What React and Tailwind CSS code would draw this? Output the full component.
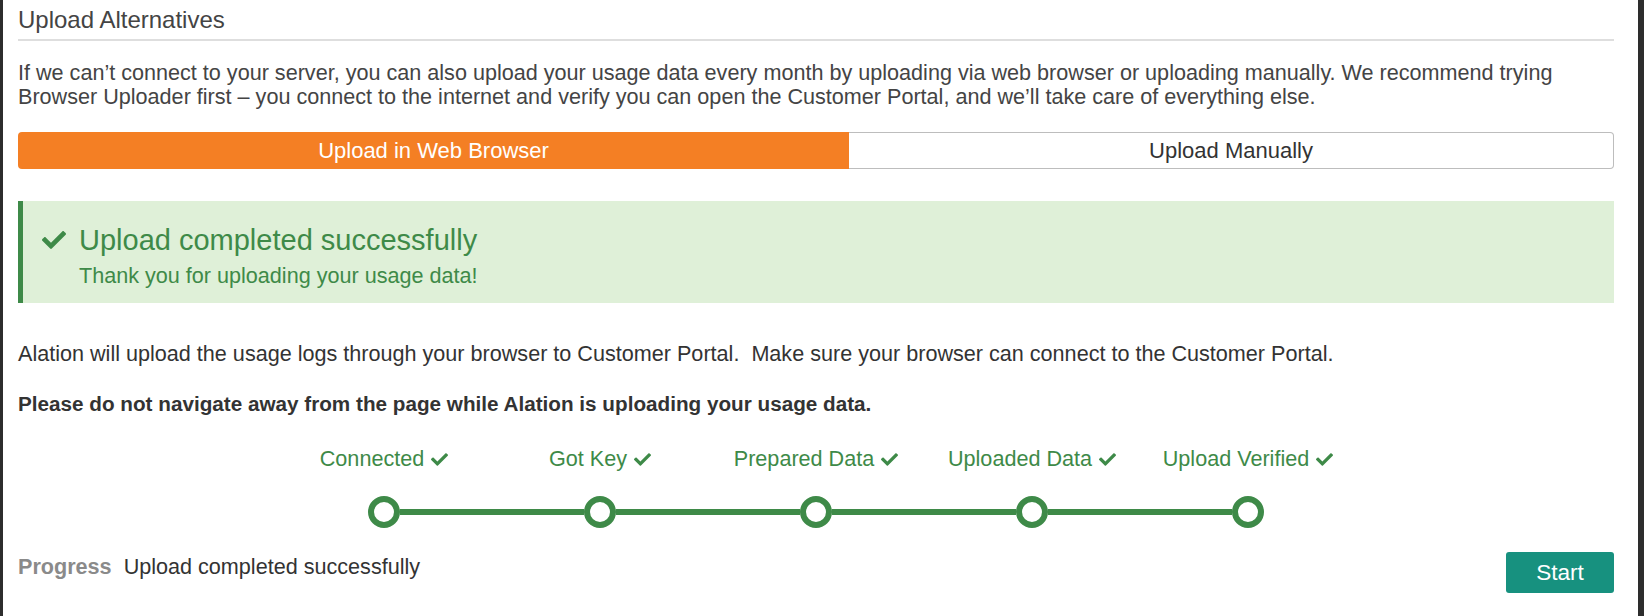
import { FaCheck } from 'react-icons/fa'

const steps = ['Connected', 'Got Key', 'Prepared Data', 'Uploaded Data', 'Upload Verified']

function Step({ label }) {
  return (
    <div className="w-[216px] flex items-center justify-center gap-[7px] text-[#3e8a48]">
      <span>{label}</span>
      <FaCheck className="w-[17px] h-[17px]" />
    </div>
  )
}

export default function App() {
  return (
    <div className="w-[1644px] h-[616px] bg-[#2d2d2d] pl-[3px] pr-[6px] font-['Liberation_Sans',Arial,sans-serif]">
      <div className="h-full bg-white pl-[15px] pr-[24px] pt-[6px] text-[21.6px] text-[#444]">
        <h1 className="text-[24px] leading-[28px] text-[#444] pb-[5px] border-b-2 border-[#dedede]">
          Upload Alternatives
        </h1>

        <p className="mt-[20px] leading-[24px]">
          If we can’t connect to your server, you can also upload your usage data every month by uploading via web browser or uploading manually. We recommend trying Browser Uploader first – you connect to the internet and verify you can open the Customer Portal, and we’ll take care of everything else.
        </p>

        <div className="mt-[23px] flex h-[37px] text-[22px]">
          <button className="w-[831px] rounded-l-[4px] bg-[#f47f24] text-white">Upload in Web Browser</button>
          <button className="flex-1 rounded-r-[4px] border border-[#bdbdbd] border-l-0 bg-white text-[#333]">Upload Manually</button>
        </div>

        <div className="mt-[32px] h-[102px] bg-[#dff0d8] border-l-[5px] border-[#3e8a48] pl-[19px] pt-[22px] text-[#3e8a48]">
          <div className="flex items-center gap-[13px]">
            <FaCheck className="w-[24px] h-[24px]" />
            <span className="text-[29px] leading-[34px]">Upload completed successfully</span>
          </div>
          <div className="pl-[37px] mt-[6px] text-[21.6px] leading-[26px]">Thank you for uploading your usage data!</div>
        </div>

        <p className="mt-[39px] leading-[24px] text-[#333]">
          Alation will upload the usage logs through your browser to Customer Portal.&nbsp; Make sure your browser can connect to the Customer Portal.
        </p>
        <p className="mt-[26px] leading-[24px] font-bold text-[20.7px] text-[#333]">
          Please do not navigate away from the page while Alation is uploading your usage data.
        </p>

        <div className="mt-[31px] flex justify-center leading-[24px]">
          {steps.map((s) => <Step key={s} label={s} />)}
        </div>

        <div className="mt-[25px] flex justify-center items-center">
          {steps.map((s, i) => (
            <div key={s} className="flex items-center">
              {i > 0 && <div className="w-[184px] h-[6px] bg-[#3e8a48]" />}
              <div className="w-[32px] h-[32px] rounded-full border-[6px] border-[#3e8a48] bg-white" />
            </div>
          ))}
        </div>

        <div className="mt-[24px] flex items-start justify-between">
          <div className="mt-[3px] flex items-center gap-[12px] leading-[24px] text-[#333]">
            <span className="font-bold text-[#8a8a8a]">Progress</span>
            <span>Upload completed successfully</span>
          </div>
          <button className="w-[108px] h-[41px] rounded-[3px] bg-[#17917f] text-white text-[22.6px]">Start</button>
        </div>
      </div>
    </div>
  )
}
